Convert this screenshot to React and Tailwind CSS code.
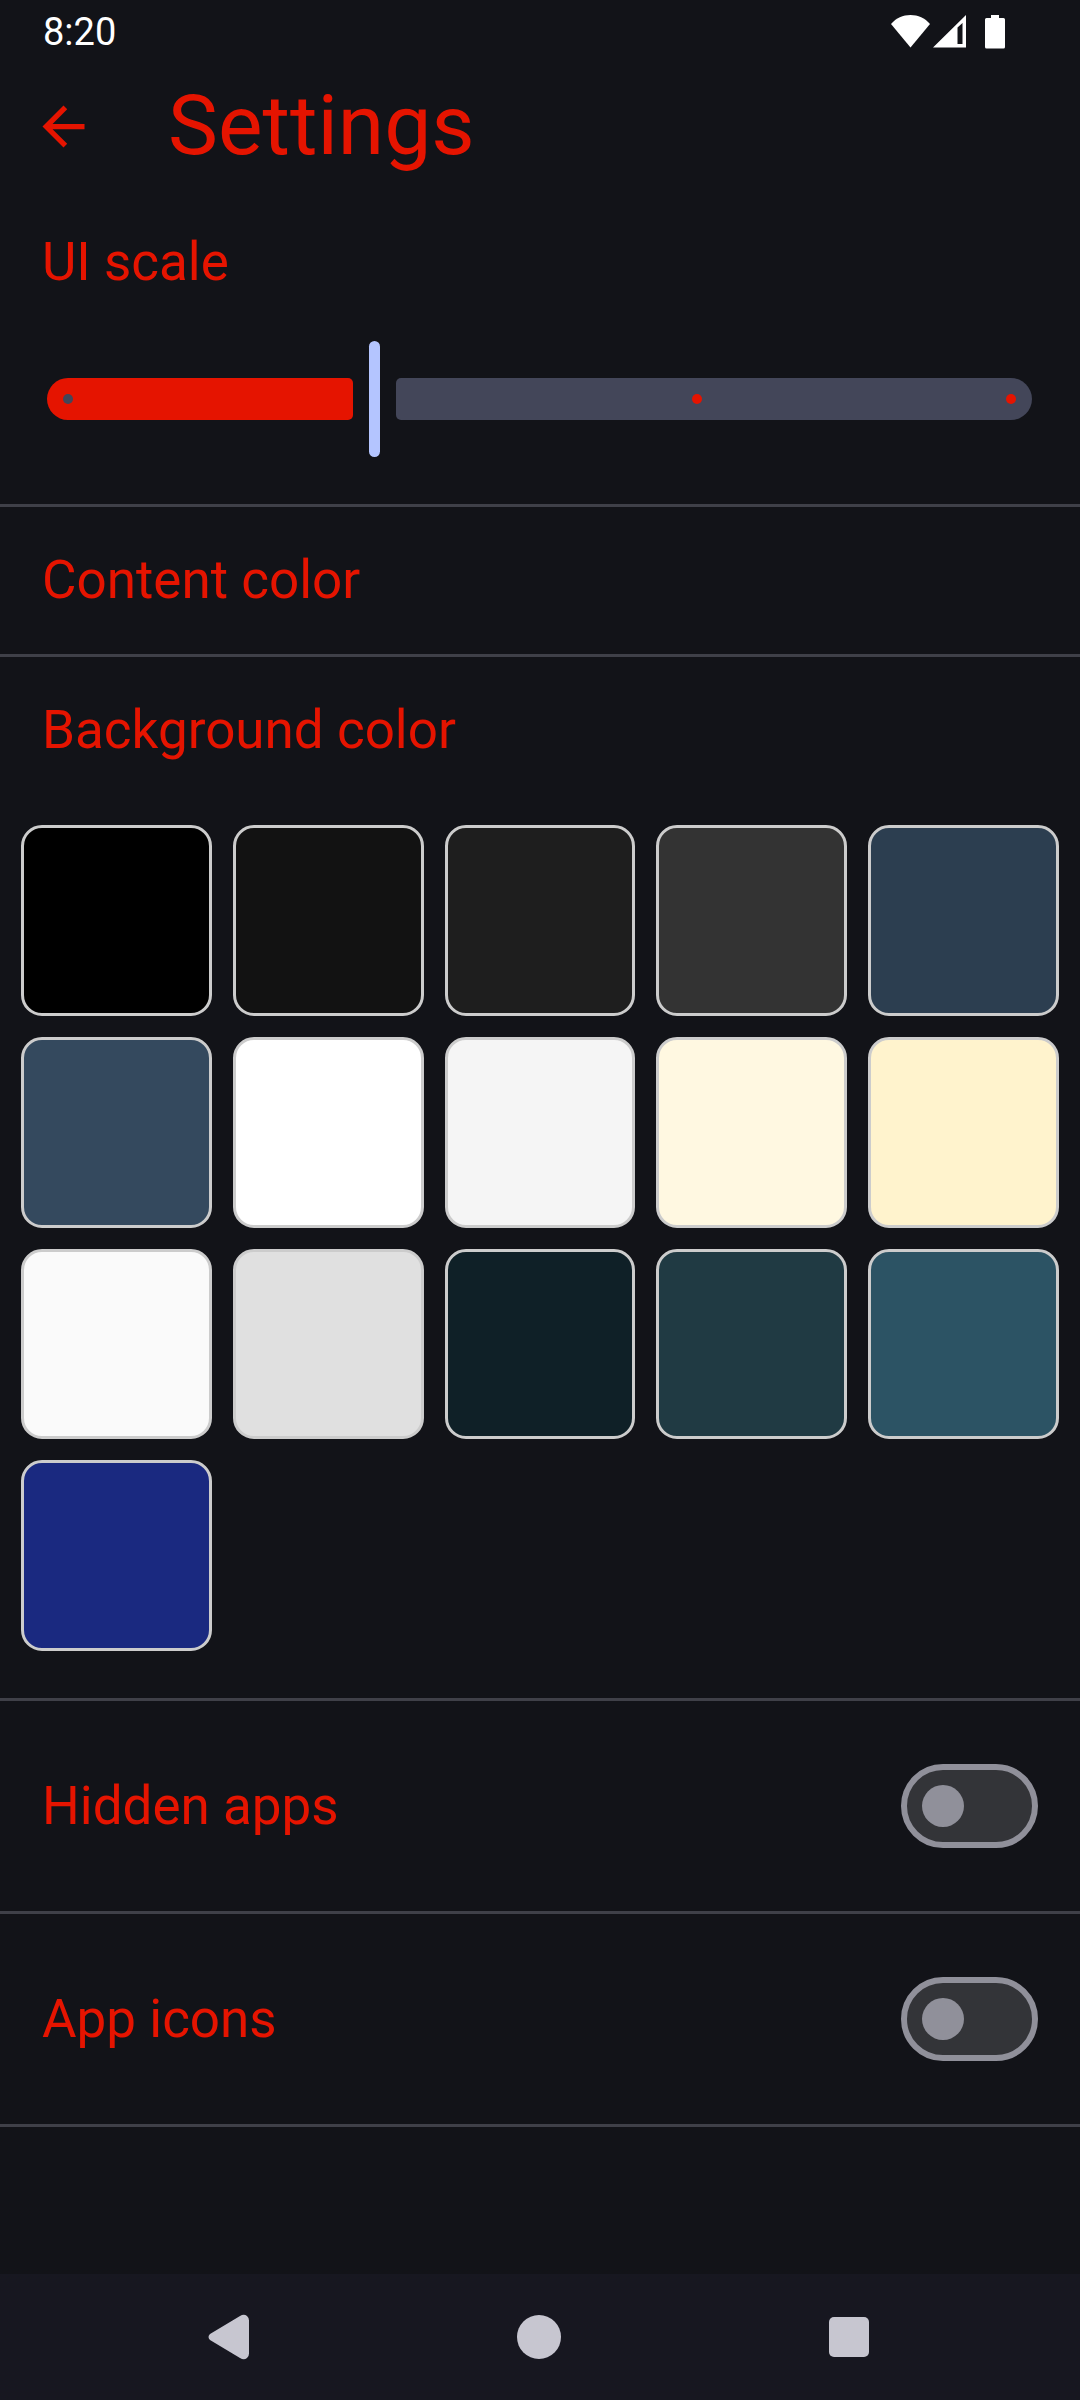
import { useState } from "react";

const DIVIDER = "border-b-[3px] border-[#3f4048]";
const ROW_TITLE = "text-[53px] leading-[63px]";

const SWATCHES = [
  { name: "Black", fill: "bg-[#000000]" },
  { name: "Near black", fill: "bg-[#121212]" },
  { name: "Charcoal", fill: "bg-[#1e1e1e]" },
  { name: "Dark gray", fill: "bg-[#333333]" },
  { name: "Midnight blue", fill: "bg-[#2c3e50]" },
  { name: "Wet asphalt", fill: "bg-[#34495e]" },
  { name: "White", fill: "bg-[#ffffff]" },
  { name: "White smoke", fill: "bg-[#f5f5f5]" },
  { name: "Cream", fill: "bg-[#fff8e1]" },
  { name: "Light amber", fill: "bg-[#fff3cd]" },
  { name: "Snow", fill: "bg-[#fafafa]" },
  { name: "Light gray", fill: "bg-[#e0e0e0]" },
  { name: "Deep teal", fill: "bg-[#0f2027]" },
  { name: "Dark teal", fill: "bg-[#203a43]" },
  { name: "Teal", fill: "bg-[#2c5364]" },
  { name: "Indigo", fill: "bg-[#1a2980]" },
];

function StatusBar() {
  return (
    <div className="flex h-[63px] items-center justify-between pl-[43px] pr-[75px] text-white">
      <span className="text-[38px] leading-[44px]">8:20</span>
      <div className="flex items-center">
        <svg className="h-[34px] w-[39px]" viewBox="0 0 39 34" fill="currentColor" aria-hidden="true">
          <path d="M19.5 32.500 0 9C5 3 12 0 19.500 0S34 3 39 9Z" />
        </svg>
        <svg className="ml-[3px] h-[34px] w-[33px]" viewBox="0 0 33 34" fill="currentColor" aria-hidden="true">
          <path fillRule="evenodd" d="M0 32.500 33 0V32.500ZM24.500 12.500V29H29.500V8Z" />
        </svg>
        <svg className="ml-[19px] h-[34px] w-5" viewBox="0 0 20 34" fill="currentColor" aria-hidden="true">
          <path d="M6 0H14V3H18.500Q20 3 20 4.500V32Q20 33.500 18.500 33.500H1.500Q0 33.500 0 32V4.500Q0 3 1.500 3H6Z" />
        </svg>
      </div>
    </div>
  );
}

function ScaleSlider() {
  const [value, setValue] = useState(1);
  const share = (value / 3) * 100;
  return (
    <div className="pr-[48px] pb-[42px] pl-[47px]">
      <div className="relative flex h-[126px] items-center gap-4">
        <div
          className="h-[42px] shrink-0 rounded-l-[21px] rounded-r-[5px] bg-[#e51400]"
          style={{ width: `max(0px, calc(${share}% - 22px))` }}
        />
        <div className="h-[116px] w-[11px] shrink-0 rounded-full bg-[#b4c5ff]" />
        <div className="h-[42px] min-w-0 flex-1 rounded-l-[5px] rounded-r-[21px] bg-[#434659]" />
        <div className="absolute inset-0 flex items-center justify-between px-4">
          {[0, 1, 2, 3].map((step) => (
            <span
              key={step}
              className={
                step === value
                  ? "invisible size-[10px]"
                  : step < value
                    ? "size-[10px] rounded-full bg-[#434659]"
                    : "size-[10px] rounded-full bg-[#e51400]"
              }
            />
          ))}
        </div>
        <input
          id="ui-scale"
          type="range"
          min="0"
          max="3"
          step="1"
          value={value}
          onChange={(e) => setValue(Number(e.target.value))}
          className="absolute inset-0 size-full cursor-pointer opacity-0"
        />
      </div>
    </div>
  );
}

function SwitchRow({ id, label }) {
  return (
    <div className={`flex h-[213px] items-center justify-between px-[42px] ${DIVIDER}`}>
      <label htmlFor={id} className={ROW_TITLE}>
        {label}
      </label>
      <input
        id={id}
        type="checkbox"
        role="switch"
        className="flex h-[84px] w-[137px] cursor-pointer appearance-none items-center rounded-full border-[6px] border-[#90909a] bg-[#333438] px-[15px] before:size-[42px] before:rounded-full before:bg-[#90909a] checked:justify-end"
      />
    </div>
  );
}

export default function App() {
  const [background, setBackground] = useState(null);
  return (
    <div className="flex min-h-screen flex-col bg-[#121318] font-[Roboto,sans-serif] text-[#e51400]">
      <StatusBar />
      <header className="flex h-[126px] items-center gap-[42px]">
        <button type="button" aria-label="Back" className="flex size-[126px] items-center justify-center">
          <svg className="size-[63px]" viewBox="0 0 24 24" fill="currentColor" aria-hidden="true">
            <path d="M20 11H7.830l5.590-5.590L12 4l-8 8 8 8 1.410-1.410L7.830 13H20v-2z" />
          </svg>
        </button>
        <h1 className="text-[84px] leading-[98px]">Settings</h1>
      </header>

      <main className="flex-1">
        <section className={DIVIDER}>
          <label htmlFor="ui-scale" className={`flex h-[147px] items-center px-[42px] ${ROW_TITLE}`}>
            UI scale
          </label>
          <ScaleSlider />
        </section>

        <button
          type="button"
          className={`flex h-[150px] w-full items-center px-[42px] text-left ${ROW_TITLE} ${DIVIDER}`}
        >
          Content color
        </button>

        <section className={DIVIDER}>
          <button
            type="button"
            aria-expanded="true"
            className={`flex h-[147px] w-full items-center px-[42px] text-left ${ROW_TITLE}`}
          >
            Background color
          </button>
          <div className="grid grid-cols-5 gap-[21px] px-[21px] pt-[21px] pb-[47px]">
            {SWATCHES.map(({ name, fill }) => (
              <button
                key={name}
                type="button"
                aria-label={name}
                aria-pressed={background === name}
                onClick={() => setBackground(name)}
                className={`aspect-square rounded-[21px] border-[3px] border-[#cccccc] ${fill}`}
              />
            ))}
          </div>
        </section>

        <SwitchRow id="hidden-apps" label="Hidden apps" />
        <SwitchRow id="app-icons" label="App icons" />
      </main>

      <nav className="flex h-[126px] items-center justify-center gap-[184px] bg-[#171720] pr-[2px] text-[#c7c6d0]">
        <button type="button" aria-label="Back" className="flex size-[126px] items-center justify-center">
          <svg className="h-[46px] w-[42px]" viewBox="0 0 42 46" fill="currentColor" aria-hidden="true">
            <path d="M2 20 32 2Q36 -.5 39 2Q41 3.500 41 6.500V39.500Q41 42.500 39 44Q36 46.500 32 44L2 26Q-1 23 2 20Z" />
          </svg>
        </button>
        <button type="button" aria-label="Home" className="flex size-[126px] items-center justify-center">
          <span className="size-11 rounded-full bg-current" />
        </button>
        <button type="button" aria-label="Overview" className="flex size-[126px] items-center justify-center">
          <span className="size-10 rounded-[5px] bg-current" />
        </button>
      </nav>
    </div>
  );
}
